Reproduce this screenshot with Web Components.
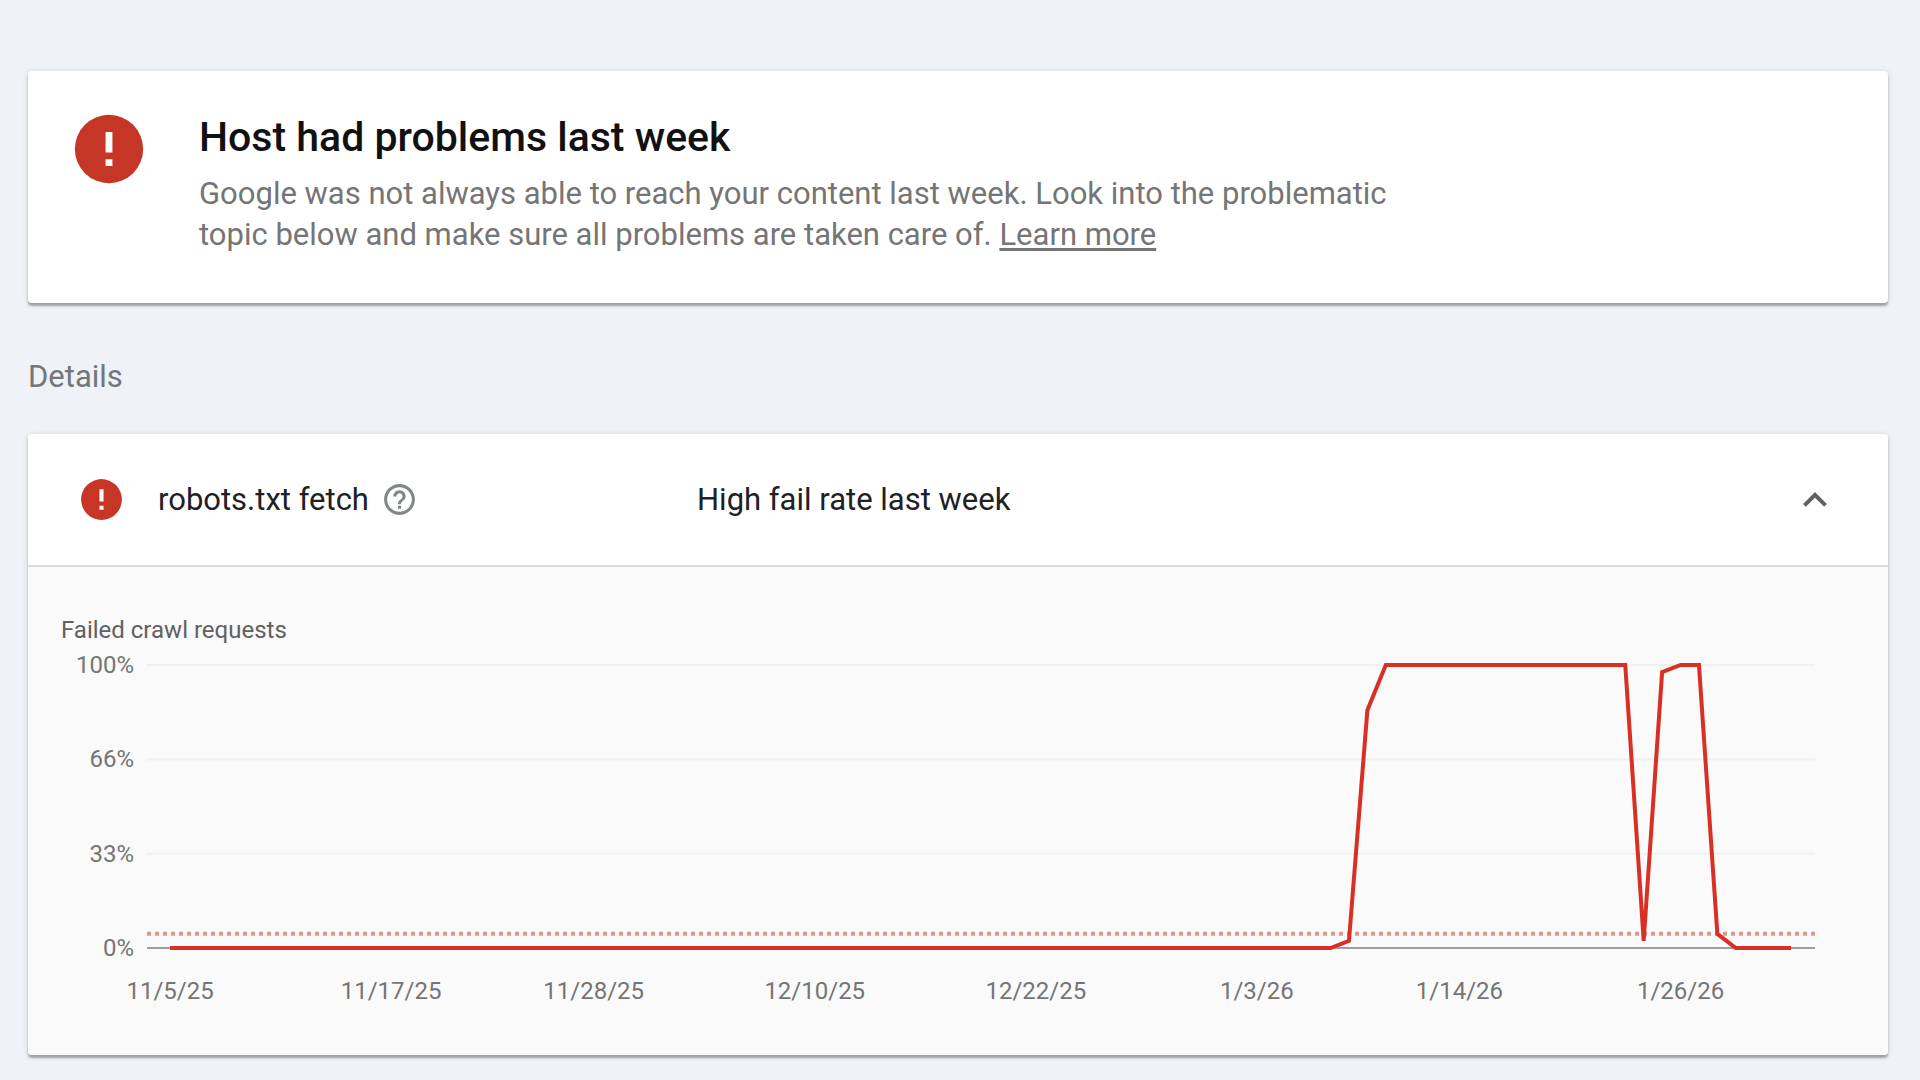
<!DOCTYPE html>
<html lang="en">
<head>
<meta charset="utf-8">
<meta name="viewport" content="width=device-width, initial-scale=1">
<title>Host status</title>
<style>
    body {
        margin: 0;
        background: #eff2f7;
        color: #202124;
        font: 31px/40px Roboto, "Liberation Sans", sans-serif;
    }
</style>
</head>
<body>
<host-status-page>
    <status-summary>
        <span slot="title">Host had problems last week</span>
        Google was not always able to reach your content last week. Look into the problematic topic below and make sure all problems are taken care of. <a href="#learn-more">Learn more</a>
    </status-summary>
    <detail-panel>
        <span slot="name">robots.txt fetch</span>
        <span slot="status">High fail rate last week</span>
        <crawl-chart label="Failed crawl requests"></crawl-chart>
    </detail-panel>
</host-status-page>

<script>
class ErrorIcon extends HTMLElement {
    constructor() {
        super();
        this.attachShadow({ mode: 'open' });
        this.shadowRoot.innerHTML = `
            <style>
                :host { display: block; flex: none; width: 49px; height: 49px; color: #c63626; }
                svg { display: block; width: 100%; height: 100%; }
            </style>
            <svg viewBox="0 0 24 24" role="img" aria-label="Error">
                <circle cx="12" cy="12" r="10" fill="currentColor"/>
                <path d="M11 7h2v6h-2zM11 15h2v2h-2z" fill="#fff"/>
            </svg>
        `;
    }
}

class HostStatusPage extends HTMLElement {
    constructor() {
        super();
        this.attachShadow({ mode: 'open' });
        this.shadowRoot.innerHTML = `
            <style>
                :host { display: block; padding: 71px 32px 24px 28px; }
                ::slotted(*) {
                    border-radius: 4px;
                    box-shadow: 0 3px 2px rgba(0, 0, 0, .28), 0 1px 6px rgba(0, 0, 0, .14);
                }
                h2 { margin: 54px 0 37px; font-size: inherit; font-weight: 400; color: #73767a; }
            </style>
            <slot name="summary"></slot>
            <h2>Details</h2>
            <slot></slot>
        `;
    }

    connectedCallback() {
        this.querySelector('status-summary').slot = 'summary';
    }
}

class StatusSummary extends HTMLElement {
    constructor() {
        super();
        this.attachShadow({ mode: 'open' });
        this.shadowRoot.innerHTML = `
            <style>
                :host { display: flex; gap: 49px; padding: 37px 40px 48px; background: #fff; }
                error-icon { width: 82px; height: 82px; }
                .text { padding-top: 5px; }
                h1 { margin: 0 0 12px; font-size: 41px; line-height: 48px; font-weight: 500; color: #111; }
                p { margin: 0; max-width: 1200px; line-height: 41px; color: #757575; }
                ::slotted(a) { color: inherit; text-underline-offset: 3px; }
            </style>
            <error-icon></error-icon>
            <div class="text">
                <h1><slot name="title"></slot></h1>
                <p><slot></slot></p>
            </div>
        `;
    }
}

class DetailPanel extends HTMLElement {
    constructor() {
        super();
        this.attachShadow({ mode: 'open' });
        this.shadowRoot.innerHTML = `
            <style>
                :host { display: block; background: #fff; overflow: hidden; }
                header {
                    display: grid;
                    grid-template-columns: 49px 507px 1fr 48px;
                    column-gap: 32px;
                    align-items: center;
                    min-height: 131px;
                    padding: 0 49px;
                    border-bottom: 2px solid #dadcde;
                }
                .name { display: flex; align-items: center; gap: 12px; }
                button { display: block; padding: 0; border: 0; background: none; cursor: pointer; }
                button svg { display: block; width: 100%; height: 100%; fill: currentColor; }
                .help { width: 37px; height: 37px; color: #80868b; }
                .toggle { width: 48px; height: 48px; color: #616161; }
                .toggle[aria-expanded="false"] svg { transform: rotate(180deg); }
                .content { background: #fafafa; }
            </style>
            <header>
                <error-icon></error-icon>
                <div class="name">
                    <slot name="name"></slot>
                    <button class="help" type="button" aria-label="Help">
                        <svg viewBox="0 0 24 24"><path d="M11 18h2v-2h-2v2zm1-16C6.480 2 2 6.480 2 12s4.480 10 10 10 10-4.480 10-10S17.520 2 12 2zm0 18c-4.410 0-8-3.590-8-8s3.590-8 8-8 8 3.590 8 8-3.590 8-8 8zm0-14c-2.210 0-4 1.790-4 4h2c0-1.100.9-2 2-2s2 .9 2 2c0 2-3 1.750-3 5h2c0-2.250 3-2.500 3-5 0-2.210-1.790-4-4-4z"/></svg>
                    </button>
                </div>
                <slot name="status"></slot>
                <button class="toggle" type="button" aria-label="Toggle details" aria-expanded="true">
                    <svg viewBox="0 0 24 24"><path d="M12 8l-6 6 1.410 1.410L12 10.830l4.590 4.580L18 14z"/></svg>
                </button>
            </header>
            <div class="content"><slot></slot></div>
        `;
    }

    connectedCallback() {
        const toggle = this.shadowRoot.querySelector('.toggle');
        const content = this.shadowRoot.querySelector('.content');
        toggle.addEventListener('click', () => {
            content.hidden = !content.hidden;
            toggle.setAttribute('aria-expanded', String(!content.hidden));
        });
    }
}

// Fail rate in percent, as [day, value]; day 0 is 11/5/25
const failRate = [
    [0, 0], [63, 0], [64, 2.5], [65, 84], [66, 100], [79, 100], [80, 2.5],
    [81, 97.5], [82, 100], [83, 100], [84, 5], [85, 0], [88, 0]
];
const dateTicks = [
    [0, '11/5/25'], [12, '11/17/25'], [23, '11/28/25'], [35, '12/10/25'],
    [47, '12/22/25'], [59, '1/3/26'], [70, '1/14/26'], [82, '1/26/26']
];
const firstDay = -1.25;
const daySpan = 90.55;
const threshold = 5;

class CrawlChart extends HTMLElement {
    constructor() {
        super();
        this.attachShadow({ mode: 'open' });
        this.shadowRoot.innerHTML = `
            <style>
                :host { display: block; padding: 49px 73px 107px 33px; font-size: 24px; line-height: 28px; color: #757575; }
                .label { margin-bottom: 21px; color: #616161; }
                .chart { display: grid; grid-template-columns: 73px 1fr; column-gap: 13px; height: 283px; }
                .scale { display: flex; flex-direction: column; justify-content: space-between; margin: -14px 0; text-align: right; }
                svg { display: block; width: 100%; height: 100%; overflow: visible; }
                text { fill: currentColor; text-anchor: middle; }
                .grid { stroke: #f0f0f0; stroke-width: 2; }
                .base { stroke: #9e9e9e; stroke-width: 2; }
                .threshold { stroke: #e4928c; stroke-width: 4; stroke-dasharray: 4 4; }
                polyline { fill: none; stroke: #d93025; stroke-width: 4; vector-effect: non-scaling-stroke; }
            </style>
            <div class="label"></div>
            <div class="chart">
                <div class="scale"><span>100%</span><span>66%</span><span>33%</span><span>0%</span></div>
                <div class="plot"></div>
            </div>
        `;
    }

    connectedCallback() {
        this.shadowRoot.querySelector('.label').textContent = this.getAttribute('label');
        const points = failRate.map(([day, value]) => `${day},${100 - value}`).join(' ');
        const hline = (value, name) => `<line class="${name}" x1="0" x2="100%" y1="${100 - value}%" y2="${100 - value}%"/>`;
        const dates = dateTicks.map(([day, text]) =>
            `<text x="${(day - firstDay) / daySpan * 100}%" y="334">${text}</text>`).join('');
        this.shadowRoot.querySelector('.plot').innerHTML = `
            <svg>
                ${hline(100, 'grid')}${hline(66.6, 'grid')}${hline(33.3, 'grid')}
                ${hline(0, 'base')}${hline(threshold, 'threshold')}
                <svg viewBox="${firstDay} 0 ${daySpan} 100" preserveAspectRatio="none">
                    <polyline points="${points}"/>
                </svg>
                ${dates}
            </svg>
        `;
    }
}

customElements.define('error-icon', ErrorIcon);
customElements.define('host-status-page', HostStatusPage);
customElements.define('status-summary', StatusSummary);
customElements.define('detail-panel', DetailPanel);
customElements.define('crawl-chart', CrawlChart);
</script>
</body>
</html>
